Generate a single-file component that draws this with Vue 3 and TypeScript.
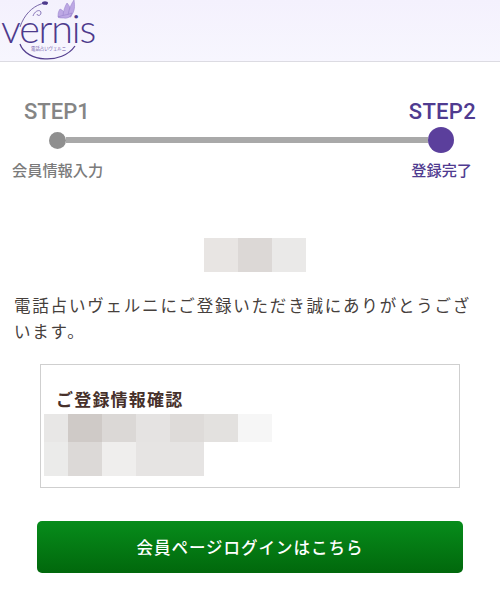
<script setup lang="ts">
interface Block { w: number; c: string }
const topBlocks: Block[] = [
  { w: 34, c: '#e8e5e3' }, { w: 34, c: '#dcd8d6' }, { w: 34, c: '#eae9e8' },
]
const row1: Block[] = [
  { w: 24, c: '#e8e7e6' }, { w: 34, c: '#cfcac7' }, { w: 34, c: '#dbd8d6' }, { w: 34, c: '#e5e3e2' },
  { w: 34, c: '#dedbd9' }, { w: 34, c: '#e3e1df' }, { w: 34, c: '#f6f6f6' },
]
const row2: Block[] = [
  { w: 24, c: '#ebebea' }, { w: 34, c: '#dcd9d7' }, { w: 34, c: '#efeeed' }, { w: 68, c: '#e6e4e3' },
]
</script>

<template>
  <div class="page">
    <header class="head">
      <svg class="logo" width="120" height="61" viewBox="0 0 120 61">
        <g fill="#bda8e4" stroke="#937cc9" stroke-width=".5">
          <path d="M58 17 C58 14 58 12 60 9 C63 10 65 13 66 17Z" />
          <path d="M63 17 C63 11 65 6 67 3 C70 6 72 12 71 17Z" />
          <path d="M68 15 C69 9 71 4 74 0 C75 6 75 11 71 16Z" />
          <path d="M58 17 C62 15 68 15 72 13 C71 16 68 19 64 18 C61 18 59 18 58 17Z" />
        </g>
        <path d="M20 27 C24 15 32 7 41 4" fill="none" stroke="#55408f" stroke-width=".8" />
        <path d="M41 4 C44 3 46 3 47 5 M33 16 C35 10 41 9 41 13 C41 16 37 16 37 14" fill="none" stroke="#6d58a8" stroke-width=".8" />
        <ellipse cx="45" cy="3" rx="3" ry="1.800" fill="#4d3a8c" />
        <text x="1" y="43" class="brand">vernis</text>
        <text x="31" y="50" class="tag">電話占いヴェルニ</text>
        <path d="M20 44 C26 62 62 65 75 46" fill="none" stroke="#55408f" stroke-width="1.300" />
      </svg>
    </header>

    <section class="steps">
      <div class="titles">
        <span class="stepname">STEP1</span>
        <span class="stepname active">STEP2</span>
      </div>
      <div class="track">
        <span class="dot"></span>
        <span class="line"></span>
        <span class="dot big"></span>
      </div>
      <div class="labels">
        <span>会員情報入力</span>
        <span class="active">登録完了</span>
      </div>
    </section>

    <div class="blur top">
      <span v-for="(b, i) in topBlocks" :key="i" :style="{ width: b.w + 'px', background: b.c }"></span>
    </div>

    <p class="message">電話占いヴェルニにご登録いただき誠にありがとうございます。</p>

    <div class="box">
      <h2>ご登録情報確認</h2>
      <div class="blur row one">
        <span v-for="(b, i) in row1" :key="i" :style="{ width: b.w + 'px', background: b.c }"></span>
      </div>
      <div class="blur row two">
        <span v-for="(b, i) in row2" :key="i" :style="{ width: b.w + 'px', background: b.c }"></span>
      </div>
    </div>

    <a class="login">会員ページログインはこちら</a>
  </div>
</template>

<style scoped>
.page {
  width: 500px;
  height: 601px;
  overflow: hidden;
  background: #fff;
  font-family: "Noto Sans CJK JP", "Noto Sans", sans-serif;
}
.head {
  height: 62px;
  box-sizing: border-box;
  background: linear-gradient(#f4f1fd, #f7f6fe);
  border-bottom: 1px solid #dcdbe2;
}
.logo { display: block; }
.brand {
  font-family: Lato, sans-serif;
  font-weight: 300;
  font-size: 39.500px;
  letter-spacing: -1.200px;
  fill: #4d3a8c;
}
.tag {
  font-size: 4.400px;
  fill: #6d58a8;
}
.steps {
  padding: 36px 24px 0 12px;
}
.titles {
  display: flex;
  justify-content: space-between;
  padding-left: 12px;
  height: 28px;
}
.stepname {
  font-family: Roboto, sans-serif;
  font-size: 22px;
  font-weight: 500;
  line-height: 28px;
  color: #858585;
}
.stepname.active { color: #4f3b90; letter-spacing: .3px; }
.track {
  display: flex;
  align-items: center;
  height: 26px;
  margin: 1px 22px 0 37px;
}
.dot {
  flex: none;
  width: 17px;
  height: 17px;
  border-radius: 50%;
  background: #8f8f8f;
}
.dot.big {
  width: 26px;
  height: 26px;
  background: #5b3f9c;
}
.line {
  flex: 1;
  height: 6px;
  background: #a9a9a9;
}
.labels {
  display: flex;
  justify-content: space-between;
  font-size: 15.200px;
  font-weight: 500;
  line-height: 20px;
  margin-top: 6px;
  color: #7b7b7b;
  padding-right: 4px;
}
.labels .active { color: #4f3b90; }
.blur { display: flex; }
.blur span { display: block; }
.top {
  justify-content: center;
  height: 34px;
  margin-top: 59px;
  padding-left: 10px;
  filter: blur(.5px);
}
.message {
  margin: 20px 14px 0;
  font-size: 16.500px;
  line-height: 26px;
  letter-spacing: 1.800px;
  color: #46403c;
}
.box {
  box-sizing: border-box;
  width: 420px;
  height: 124px;
  margin: 20px 0 0 40px;
  padding: 22px 0 0 3px;
  border: 1px solid #cfcfcf;
}
.box h2 {
  margin: 0 0 0 12px;
  font-size: 17px;
  line-height: 24px;
  font-weight: 700;
  letter-spacing: 1.200px;
  color: #46302a;
}
.row { filter: blur(.5px); }
.one { height: 28px; margin-top: 3px; }
.two { height: 34px; }
.login {
  display: flex;
  align-items: center;
  justify-content: center;
  box-sizing: border-box;
  width: 426px;
  height: 52px;
  margin: 33px 0 0 37px;
  border-radius: 5px;
  background: linear-gradient(#078c1b, #01680c);
  color: #fff;
  font-size: 16.500px;
  font-weight: 500;
  letter-spacing: 1px;
}
</style>
